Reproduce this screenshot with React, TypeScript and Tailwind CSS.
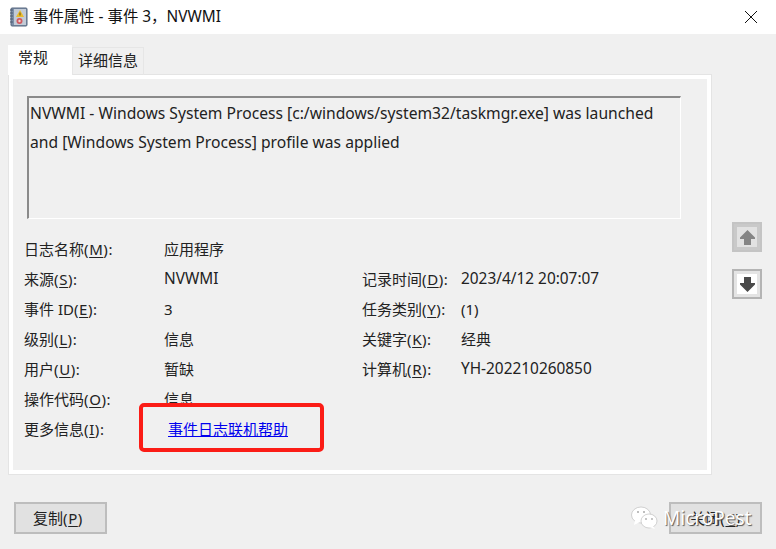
import React from "react";

const font = "font-['Noto_Sans','Noto_Sans_CJK_SC',sans-serif]";

function Key({ before, k, after = "):" }: { before: string; k: string; after?: string }) {
  return (
    <span>
      {before}
      <span className="tracking-[0.6px]">
        (<span className="underline underline-offset-2">{k}</span>
        {after}
      </span>
    </span>
  );
}

function Latin({ children }: { children: React.ReactNode }) {
  return <span className="text-[15.4px]">{children}</span>;
}

function Row({ label, value, side }: { label: React.ReactNode; value?: React.ReactNode; side?: [React.ReactNode, React.ReactNode] }) {
  return (
    <div className="flex h-[30px] items-center text-[15px] text-[#222]">
      <div className="w-[140px] shrink-0">{label}</div>
      <div className="w-[198px] shrink-0">{value}</div>
      {side && (
        <>
          <div className="w-[99px] shrink-0">{side[0]}</div>
          <div>{side[1]}</div>
        </>
      )}
    </div>
  );
}

function ArrowButton({ up }: { up?: boolean }) {
  return (
    <div className={up ? "flex h-[30px] w-[30px] items-center justify-center border-2 border-[#c4c4c4] bg-[#c9c9c9]" : "flex h-[30px] w-[30px] items-center justify-center border-2 border-[#b4b4b4] bg-[#e4e4e4]"}>
      <div className={up ? "flex h-[20px] w-[20px] items-center justify-center bg-[#e2e2e2]" : "flex h-[20px] w-[20px] items-center justify-center bg-white"}>
        <svg width="17" height="17" viewBox="0 0 17 17">
          {up ? (
            <path d="M8.5 1 L16 8.5 V10 H12 V16 H5 V10 H1 V8.5 Z" fill="#858585" />
          ) : (
            <path d="M8.5 16 L16 8.5 V7 H12 V1 H5 V7 H1 V8.5 Z" fill="#4a4a4a" />
          )}
        </svg>
      </div>
    </div>
  );
}

function LogIcon() {
  return (
    <svg width="19" height="20" viewBox="0 0 19 20">
      <rect x="2" y="1" width="16" height="18" rx="1" fill="#7d8fa8" stroke="#56677f" />
      <rect x="5" y="2" width="12" height="16" fill="#c3cbd6" />
      <path d="M1 3h3M1 6h3M1 9h3M1 12h3M1 15h3" stroke="#4f5d72" strokeWidth="1" />
      <path d="M11 3 L15 10 H7 Z" fill="#e9bb2c" />
      <rect x="10.5" y="5.5" width="1" height="3" fill="#6b4f10" />
      <circle cx="10.5" cy="14" r="3" fill="#d25a5f" />
      <circle cx="10.5" cy="14" r="1.2" fill="#f2d5d5" />
    </svg>
  );
}

function WeChat() {
  return (
    <svg width="27" height="24" viewBox="0 0 27 24">
      <ellipse cx="10" cy="9" rx="9.5" ry="8" fill="#fff" stroke="#b5b5b5" strokeWidth="0.6" />
      <path d="M4 14 L3 19 L9 16 Z" fill="#fff" />
      <ellipse cx="18" cy="15" rx="8" ry="7" fill="#fff" stroke="#b5b5b5" strokeWidth="0.6" />
      <path d="M22 20 L24 23 L18 21 Z" fill="#fff" />
      <circle cx="7" cy="6" r="1" fill="#aaa" />
      <circle cx="13" cy="6" r="1" fill="#aaa" />
      <circle cx="15" cy="13" r="0.9" fill="#aaa" />
      <circle cx="21" cy="13" r="0.9" fill="#aaa" />
    </svg>
  );
}

export default function App() {
  return (
    <div className={`relative h-[549px] w-[776px] overflow-hidden bg-[#f0f0f0] ${font}`}>
      {/* title bar */}
      <div className="flex h-[34px] items-center bg-white pl-[9px] pr-[18px] text-[15.4px] text-[#111]">
        <LogIcon />
        <span className="ml-[5px] flex-1">事件属性 - 事件 3，NVWMI</span>
        <svg width="14" height="14" viewBox="0 0 14 14">
          <path d="M1 1 L13 13 M13 1 L1 13" stroke="#111" strokeWidth="1" />
        </svg>
      </div>

      <div className="flex pl-[8px] pr-[14px]">
        <div className="w-[703px] shrink-0">
          {/* tabs */}
          <div className="mt-[11px] flex h-[30px] items-end text-[15px] text-[#222]">
            <div className="flex h-[30px] w-[64px] justify-center bg-white pr-[14px] pt-[1px]">常规</div>
            <div className="flex h-[28px] w-[72px] justify-center border border-b-0 border-[#e6e6e6] pt-[1px]">详细信息</div>
          </div>

          {/* panel */}
          <div className="ml-[1px] h-[399px] border-[4px] border-white bg-[#f0f0f0] pl-[11px] pt-[17px] shadow-[0_0_0_1px_#e4e4e4]">
            <div className="ml-[3px] h-[123px] w-[654px] border-[2px] border-b-[1px] border-r-[1px] border-[#8a8a8a] border-b-white border-r-white pl-[1px] pr-[10px] pt-[1px] text-[15.65px] leading-[29px] text-[#222]">
              NVWMI - Windows System Process [c:/windows/system32/taskmgr.exe] was launched and [Windows System Process] profile was applied
            </div>
            <div className="mt-[15px]">
              <Row label={<Key before="日志名称" k="M" />} value="应用程序" />
              <Row label={<Key before="来源" k="S" />} value={<Latin>NVWMI</Latin>} side={[<Key before="记录时间" k="D" />, <Latin>2023/4/12 20:07:07</Latin>]} />
              <Row label={<Key before="事件 ID" k="E" />} value="3" side={[<Key before="任务类别" k="Y" />, "(1)"]} />
              <Row label={<Key before="级别" k="L" />} value="信息" side={[<Key before="关键字" k="K" />, "经典"]} />
              <Row label={<Key before="用户" k="U" />} value="暂缺" side={[<Key before="计算机" k="R" />, <Latin>YH-202210260850</Latin>]} />
              <Row label={<Key before="操作代码" k="O" />} value="信息" />
              <Row label={<Key before="更多信息" k="I" />} value={<a className="ml-[4px] text-[#0000ee] underline underline-offset-1">事件日志联机帮助</a>} />
            </div>
          </div>
        </div>

        {/* prev / next */}
        <div className="ml-[21px] mt-[188px] flex flex-col gap-[17px]">
          <ArrowButton up />
          <ArrowButton />
        </div>
      </div>

      {/* footer buttons */}
      <div className="mt-[28px] flex justify-between pl-[14px] pr-[14px] text-[15px] text-[#222]">
        <div className="flex h-[32px] w-[93px] items-center justify-center border-2 border-[#bdbdbd] bg-[#e1e1e1] pr-[5px]">
          <Key before="复制" k="P" after=")" />
        </div>
        <div className="flex h-[32px] w-[93px] items-center justify-center border-2 border-[#bdbdbd] bg-[#e1e1e1]">
          <Key before="关闭" k="C" after=")" />
        </div>
      </div>

      {/* red annotation */}
      <div className="absolute left-[139px] top-[403px] h-[49px] w-[185px] rounded-[5px] border-[4px] border-[#fb1c16]" />

      {/* watermark */}
      <div className="absolute left-[631px] top-[504px] flex items-center gap-[5px] text-[19px] text-white [text-shadow:1px_1px_1px_#555]">
        <WeChat />
        <span className="font-['Noto_Sans',sans-serif]">MicroPest</span>
      </div>
    </div>
  );
}
